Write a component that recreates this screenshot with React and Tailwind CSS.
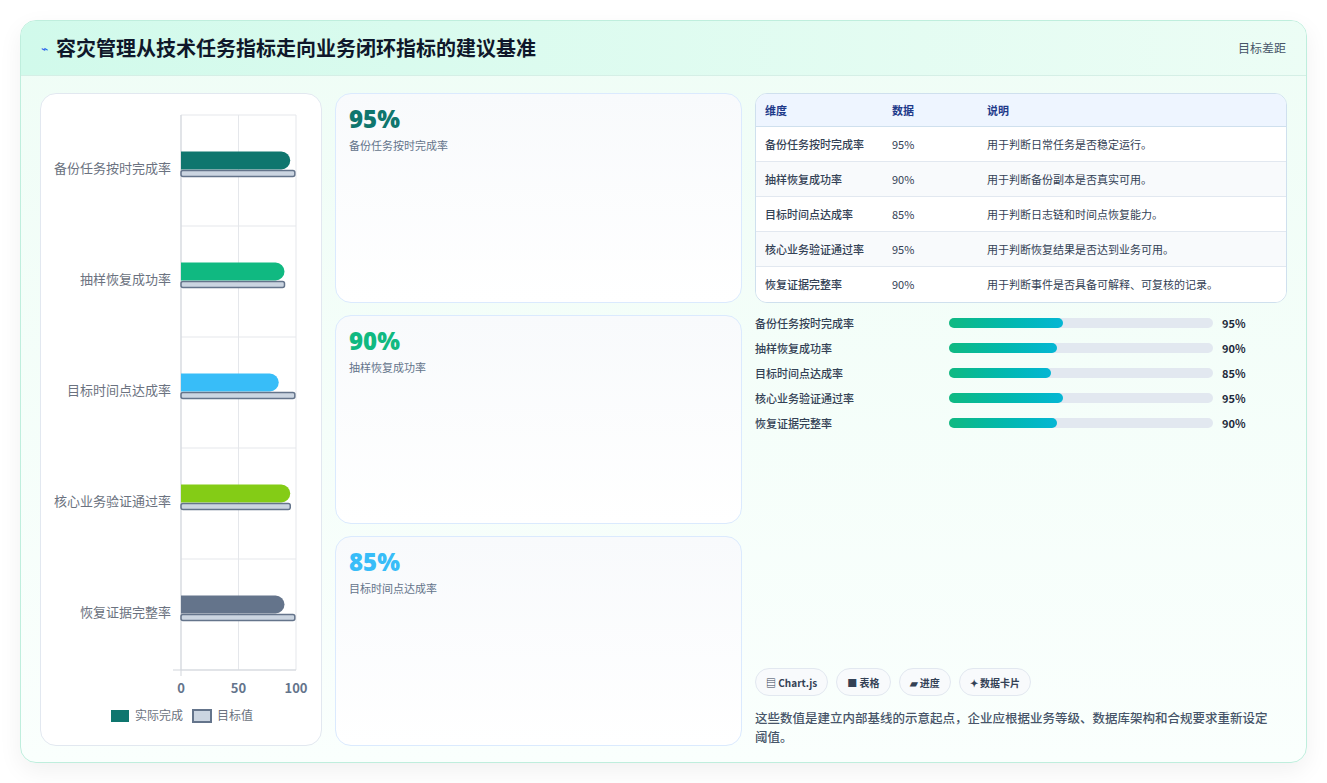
import React from "react";

const items = [
  { n: "备份任务按时完成率", v: 95, t: 99, c: "#0f766e", d: "用于判断日常任务是否稳定运行。", w: 114 },
  { n: "抽样恢复成功率", v: 90, t: 90, c: "#10b981", d: "用于判断备份副本是否真实可用。", w: 108 },
  { n: "目标时间点达成率", v: 85, t: 99, c: "#38bdf8", d: "用于判断日志链和时间点恢复能力。", w: 102 },
  { n: "核心业务验证通过率", v: 95, t: 95, c: "#84cc16", d: "用于判断恢复结果是否达到业务可用。", w: 114 },
  { n: "恢复证据完整率", v: 90, t: 99, c: "#64748b", d: "用于判断事件是否具备可解释、可复核的记录。", w: 108 },
];

const font = { fontFamily: '"Noto Sans CJK SC", "Noto Sans", sans-serif' };

function Chart() {
  const x0 = 140, k = 1.15, top = 21, h = 111;
  return (
    <svg width="282" height="651" className="block">
      <g stroke="#e5e7eb" strokeWidth="1">
        {[0, 50, 100].map((v) => (
          <line key={v} x1={x0 + v * k} x2={x0 + v * k} y1={top} y2={top + 5 * h} />
        ))}
        {[0, 1, 2, 3, 4, 5].map((i) => (
          <line key={i} x1={x0} x2={x0 + 115} y1={top + i * h} y2={top + i * h} />
        ))}
        <line x1={x0 - 8} x2={x0 + 115} y1={top + 5 * h} y2={top + 5 * h} stroke="#d1d5db" />
        <line x1={x0} x2={x0} y1={top} y2={top + 5 * h + 6} stroke="#d1d5db" />
      </g>
      {items.map((it, i) => {
        const cy = top + i * h + h / 2;
        return (
          <g key={i}>
            <text x={130} y={cy + 2} textAnchor="end" fontSize="13" fill="#6b7280">{it.n}</text>
            <path d={`M${x0} ${cy - 19} H${x0 + it.v * k - 9} a9 9 0 0 1 0 18 H${x0} Z`} fill={it.c} />
            <rect x={x0} y={cy} width={it.t * k} height={6} rx={2} fill="#cbd5e1" stroke="#64748b" strokeWidth="1.5" />
          </g>
        );
      })}
      {[0, 50, 100].map((v) => (
        <text key={v} x={x0 + v * k} y={top + 5 * h + 23} textAnchor="middle" fontSize="13" fontWeight="700" fill="#64748b">{v}</text>
      ))}
      <rect x="70" y="616" width="18" height="12" fill="#0f766e" />
      <text x="94" y="626" fontSize="12" fill="#6b7280">实际完成</text>
      <rect x="152" y="616" width="18" height="12" fill="#cbd5e1" stroke="#64748b" strokeWidth="2" />
      <text x="176" y="626" fontSize="12" fill="#6b7280">目标值</text>
    </svg>
  );
}

export default function App() {
  return (
    <div className="w-[1327px] h-[783px] bg-white p-5" style={font}>
      <div className="h-[743px] rounded-2xl border border-[#bfeedd] bg-gradient-to-b from-[#effdf6] to-[#fafffd] shadow-[0_8px_24px_rgba(0,0,0,0.06)] overflow-hidden flex flex-col">
        <div className="h-[55px] shrink-0 flex items-center justify-between px-5 bg-gradient-to-r from-[#d1faeb] to-[#ecfdf5] border-b border-[#d5efe6]">
          <div className="flex items-center gap-2">
            <span className="text-[#2563eb] text-[12px]">⌁</span>
            <span className="text-[20px] font-bold text-[#0f172a]">容灾管理从技术任务指标走向业务闭环指标的建议基准</span>
          </div>
          <span className="text-[12px] text-[#475569]">目标差距</span>
        </div>
        <div className="flex-1 flex gap-[13px] px-[19px] pt-[17px] pb-[18px]">
          <div className="w-[282px] rounded-2xl border border-[#e2e8f0] bg-white">
            <Chart />
          </div>
          <div className="w-[407px] flex flex-col gap-3">
            {items.slice(0, 3).map((it, i) => (
              <div key={i} className="flex-1 rounded-2xl border border-[#dbeafe] bg-gradient-to-b from-[#f8fafc] to-white px-[13px] pt-[10px]">
                <div className="text-[24px] font-extrabold leading-[30px]" style={{ color: it.c, fontFamily: '"Open Sans", sans-serif' }}>{it.v}%</div>
                <div className="text-[11px] text-[#64748b] mt-[3px]">{it.n}</div>
              </div>
            ))}
          </div>
          <div className="flex-1 flex flex-col">
            <div className="rounded-xl border border-[#cfe0ee] overflow-hidden bg-white text-[11px]">
              <div className="flex h-[33px] items-center bg-[#eef5ff] text-[#1e3a8a] font-semibold border-b border-[#cfe0ee]">
                <div className="w-[136px] pl-[9px]">维度</div>
                <div className="w-[95px]">数据</div>
                <div>说明</div>
              </div>
              {items.map((it, i) => (
                <div key={i} className={`flex h-[35px] items-center text-[#334155] ${i < 4 ? "border-b border-[#e2e8f0]" : ""} ${i % 2 ? "bg-[#f8fafc]" : "bg-white"}`}>
                  <div className="w-[136px] pl-[9px] font-medium">{it.n}</div>
                  <div className="w-[95px]">{it.v}%</div>
                  <div>{it.d}</div>
                </div>
              ))}
            </div>
            <div className="mt-[11px] flex flex-col gap-[7px]">
              {items.map((it, i) => (
                <div key={i} className="flex items-center h-[18px] text-[11px]">
                  <div className="w-[194px] text-[#334155] font-medium">{it.n}</div>
                  <div className="w-[264px] h-[10px] rounded-full bg-[#e2e8f0]">
                    <div className="h-full rounded-full bg-gradient-to-r from-[#10b981] to-[#06b6d4]" style={{ width: it.w }} />
                  </div>
                  <div className="ml-[9px] font-bold text-[#1e293b]">{it.v}%</div>
                </div>
              ))}
            </div>
            <div className="mt-auto flex gap-2 text-[10px] font-semibold text-[#334155]">
              {["▤ Chart.js", "■ 表格", "▰ 进度", "✦ 数据卡片"].map((c) => (
                <span key={c} className="h-[28px] px-[10px] flex items-center rounded-full border border-[#e2e8f0] bg-[#f8fafc]">{c}</span>
              ))}
            </div>
            <p className="mt-[12px] text-[12.5px] leading-[19px] font-medium text-[#475569] pr-2">这些数值是建立内部基线的示意起点，企业应根据业务等级、数据库架构和合规要求重新设定阈值。</p>
          </div>
        </div>
      </div>
    </div>
  );
}
